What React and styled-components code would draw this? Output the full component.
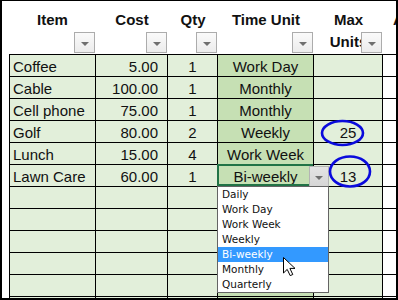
import React from "react";
import styled, { createGlobalStyle } from "styled-components";

const GlobalStyle = createGlobalStyle`
  html, body {
    margin: 0;
    padding: 0;
    background: #ffffff;
  }
  * {
    box-sizing: border-box;
  }
`;

const rows = [
  { item: "Coffee", cost: "5.00", qty: "1", unit: "Work Day" },
  { item: "Cable", cost: "100.00", qty: "1", unit: "Monthly" },
  { item: "Cell phone", cost: "75.00", qty: "1", unit: "Monthly" },
  { item: "Golf", cost: "80.00", qty: "2", unit: "Weekly", max: "25" },
  { item: "Lunch", cost: "15.00", qty: "4", unit: "Work Week" },
  { item: "Lawn Care", cost: "60.00", qty: "1", unit: "Bi-weekly", max: "13", selected: true },
  {}, {}, {}, {}, {}, {},
];

const choices = ["Daily", "Work Day", "Work Week", "Weekly", "Bi-weekly", "Monthly", "Quarterly"];

const headers = [
  { label: "Item" },
  { label: "Cost" },
  { label: "Qty" },
  { label: "Time Unit" },
  { label: "Max Units" },
  { label: "Actual", lead: true, noFilter: true },
];

const fills = {
  light: "#e2efda",
  unit: "#c6e0b4",
  none: "#ffffff",
};

function Spreadsheet() {
  return (
    <Frame>
      <Sheet>
        <Gutter />
        {headers.map((h) => (
          <HeaderCell key={h.label} $lead={h.lead}>
            {h.label}
            {!h.noFilter && <FilterButton />}
          </HeaderCell>
        ))}
        {rows.map((r, i) => (
          <React.Fragment key={i}>
            <Gutter />
            <Cell $first={i === 0} $leftEdge $align="left">{r.item}</Cell>
            <Cell $first={i === 0} $align="right">{r.cost}</Cell>
            <Cell $first={i === 0}>{r.qty}</Cell>
            <Cell $first={i === 0} $fill="unit" $selected={r.selected}>
              {r.unit}
              {r.selected && (
                <>
                  <FilterButton $tone="dark" $inCell />
                  <ValidationList>
                    {choices.map((c) => (
                      <ListItem key={c} $active={c === r.unit}>
                        {c}
                      </ListItem>
                    ))}
                  </ValidationList>
                </>
              )}
            </Cell>
            <Cell $first={i === 0}>{r.max}</Cell>
            <Cell $first={i === 0} $fill="none" $noRight />
          </React.Fragment>
        ))}
      </Sheet>
      <Annotations viewBox="0 0 398 300" width="398" height="300">
        <ellipse cx="342.5" cy="133" rx="20.5" ry="12" fill="none" stroke="#0a0adc" strokeWidth="2.6" />
        <ellipse cx="350" cy="171.5" rx="20" ry="15" fill="none" stroke="#0a0adc" strokeWidth="2.6" />
        <path
          d="M283.5 257.5 L283.5 273 L287.2 269.4 L290.2 275.6 L292.8 274.5 L289.9 268.4 L295 268.4 Z"
          fill="#ffffff"
          stroke="#000000"
          strokeWidth="1"
          strokeLinejoin="round"
        />
      </Annotations>
    </Frame>
  );
}

export default function App() {
  return (
    <>
      <GlobalStyle />
      <Spreadsheet />
    </>
  );
}

const Frame = styled.div`
  position: relative;
  width: 398px;
  height: 300px;
  border-style: solid;
  border-color: #000;
  border-width: 1px 2px 2px 2px;
  overflow: hidden;
  background: #fff;
`;

const Sheet = styled.div`
  display: grid;
  grid-template-columns: 7px 87px 72px 50px 96px 69px 13px;
  grid-template-rows: 53px 23px repeat(11, 22px);
  font-family: "Liberation Sans", Arial, sans-serif;
  color: #111;
`;

const Gutter = styled.div`
  background: #fff;
`;

const HeaderCell = styled.div`
  position: relative;
  display: flex;
  flex-direction: column;
  align-items: ${(p) => (p.$lead ? "flex-start" : "center")};
  padding-top: 8px;
  padding-left: ${(p) => (p.$lead ? "10px" : "0")};
  font-size: 15px;
  font-weight: 700;
  line-height: 22px;
  text-align: center;
  white-space: ${(p) => (p.$lead ? "nowrap" : "normal")};
  background: #fff;
`;

const FilterButton = styled.div`
  position: absolute;
  right: ${(p) => (p.$inCell ? "auto" : "1px")};
  left: ${(p) => (p.$inCell ? "91px" : "auto")};
  bottom: ${(p) => (p.$inCell ? "auto" : "1px")};
  top: ${(p) => (p.$inCell ? "1px" : "auto")};
  width: ${(p) => (p.$inCell ? "20px" : "21px")};
  height: 21px;
  border: 1px solid ${(p) => (p.$tone === "dark" ? "#b4b4b4" : "#acacac")};
  background: ${(p) =>
    p.$tone === "dark"
      ? "linear-gradient(#e4e4e4, #d6d6d6)"
      : "linear-gradient(#fafafa, #ececec)"};
  z-index: 3;
  &::after {
    content: "";
    position: absolute;
    left: 50%;
    top: 9px;
    margin-left: -4px;
    border-left: 4px solid transparent;
    border-right: 4px solid transparent;
    border-top: 4px solid #6f6f6f;
  }
`;

const Cell = styled.div`
  position: relative;
  display: flex;
  align-items: center;
  justify-content: ${(p) =>
    p.$align === "left" ? "flex-start" : p.$align === "right" ? "flex-end" : "center"};
  padding: ${(p) => (p.$align === "left" ? "1px 0 0 3px" : p.$align === "right" ? "1px 9px 0 0" : "1px 0 0 0")};
  font-size: 15px;
  white-space: nowrap;
  background: ${(p) => fills[p.$fill || "light"]};
  border-bottom: 1px solid #000;
  border-right: ${(p) => (p.$noRight ? "none" : "1px solid #000")};
  border-top: ${(p) => (p.$first ? "1px solid #000" : "none")};
  border-left: ${(p) => (p.$leftEdge ? "1px solid #000" : "none")};

  ${(p) =>
    p.$selected &&
    `
    &::after {
      content: "";
      position: absolute;
      top: -1px;
      left: -1px;
      right: 0;
      bottom: 0;
      border: 2px solid #217346;
      z-index: 2;
    }
  `}
`;

const ValidationList = styled.div`
  position: absolute;
  left: -1px;
  top: 21px;
  width: 112px;
  height: 107px;
  background: #fff;
  border: 1px solid #646464;
  z-index: 4;
  font-family: "DejaVu Sans", Verdana, sans-serif;
  font-size: 10.5px;
`;

const ListItem = styled.div`
  height: 15px;
  line-height: 15px;
  padding-left: 4px;
  color: ${(p) => (p.$active ? "#ffffff" : "#111")};
  background: ${(p) => (p.$active ? "#3399ff" : "transparent")};
`;

const Annotations = styled.svg`
  position: absolute;
  left: -2px;
  top: -1px;
  pointer-events: none;
  z-index: 6;
`;
